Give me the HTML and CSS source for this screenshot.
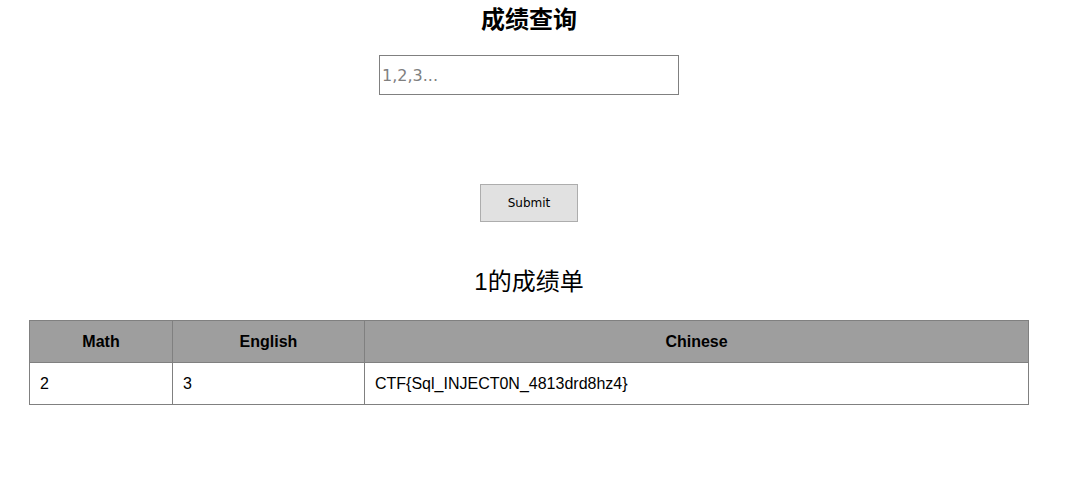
FILE: index.html
```html
<!DOCTYPE html>
<html lang="zh">
<head>
<meta charset="utf-8">
<title>成绩查询</title>
<link rel="stylesheet" href="styles.css">
</head>
<body>
<main class="page">
  <h1 class="title">成绩查询</h1>
  <form class="query">
    <input class="query-input" type="text" placeholder="1,2,3...">
    <button class="query-submit" type="button">Submit</button>
  </form>
  <h2 class="result-title">1的成绩单</h2>
  <table class="scores">
    <thead>
      <tr>
        <th class="col-math">Math</th>
        <th class="col-english">English</th>
        <th class="col-chinese">Chinese</th>
      </tr>
    </thead>
    <tbody>
      <tr>
        <td>2</td>
        <td>3</td>
        <td>CTF{Sql_INJECT0N_4813drd8hz4}</td>
      </tr>
    </tbody>
  </table>
</main>
</body>
</html>
```
FILE: styles.css
```css
html, body {
  margin: 0;
  padding: 0;
  background: #ffffff;
}
body {
  font-family: "Liberation Sans", Arial, "Noto Sans CJK SC", sans-serif;
  color: #000;
}
.page {
  width: 1058px;
  display: flex;
  flex-direction: column;
  align-items: center;
}
.title {
  margin: 5px 0 0;
  font-size: 24px;
  line-height: 30px;
  font-weight: bold;
  font-family: "Liberation Sans", "Noto Sans CJK SC", sans-serif;
}
.query {
  margin-top: 20px;
  display: flex;
  flex-direction: column;
  align-items: center;
}
.query-input {
  box-sizing: border-box;
  width: 300px;
  height: 40px;
  margin: 0;
  border: 1px solid #808080;
  padding: 0 2px;
  font-family: "DejaVu Sans", Tahoma, sans-serif;
  font-size: 16px;
  outline: none;
}
.query-input::placeholder {
  color: #808080;
}
.query-submit {
  box-sizing: border-box;
  margin-top: 89px;
  width: 98px;
  height: 38px;
  background: #e1e1e1;
  border: 1px solid #adadad;
  border-radius: 0;
  font-family: "DejaVu Sans", Tahoma, sans-serif;
  font-size: 12px;
  color: #000;
  padding: 0;
}
.result-title {
  margin: 45px 0 0;
  font-size: 24px;
  line-height: 30px;
  font-weight: normal;
  font-family: "Liberation Sans", "Noto Sans CJK SC", sans-serif;
}
.scores {
  margin-top: 23px;
  width: 1000px;
  border-collapse: collapse;
  font-size: 16px;
}
.scores th, .scores td {
  border: 1px solid #808080;
  height: 42px;
  padding: 0 10px;
  box-sizing: border-box;
}
.scores th {
  background: #9e9e9e;
  font-weight: bold;
  text-align: center;
}
.scores td {
  text-align: left;
}
.col-math { width: 143px; }
.col-english { width: 192px; }
.col-chinese { width: auto; }
```
